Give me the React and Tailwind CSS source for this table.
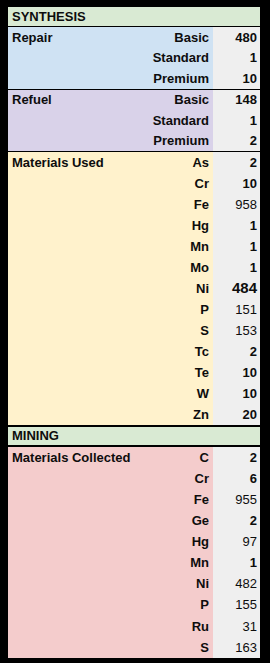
const synthesis = [
  { label: 'Repair', bg: 'bg-[#cfe2f3]', rows: [['Basic', 480], ['Standard', 1], ['Premium', 10]] },
  { label: 'Refuel', bg: 'bg-[#d9d2e9]', rows: [['Basic', 148], ['Standard', 1], ['Premium', 2]] },
]

const used = [
  ['As', 2], ['Cr', 10], ['Fe', 958], ['Hg', 1], ['Mn', 1], ['Mo', 1], ['Ni', 484],
  ['P', 151], ['S', 153], ['Tc', 2], ['Te', 10], ['W', 10], ['Zn', 20],
]

const collected = [
  ['C', 2], ['Cr', 6], ['Fe', 955], ['Ge', 2], ['Hg', 97], ['Mn', 1], ['Ni', 482],
  ['P', 155], ['Ru', 31], ['S', 163],
]

const Row = ({ label, sub, value, h, valueClass }) => (
  <div className={`flex ${h}`}>
    <div className="flex-1 flex items-center justify-between pl-1 pr-1 font-bold">
      <span>{label}</span>
      <span>{sub}</span>
    </div>
    <div className={`w-[47px] bg-[#efefef] flex items-center justify-end pr-[3px] ${valueClass}`}>{value}</div>
  </div>
)

const valueStyle = (sub, v) => {
  if (sub === 'Ni' && v === 484) return 'font-bold text-[15px]'
  return v < 30 ? 'font-bold' : 'font-normal'
}

export default function App() {
  return (
    <div className="bg-black w-[270px] h-[663px] pt-[7px] pl-[8px] pr-[10px] text-[13px] text-[#0d0d0d] font-['Liberation_Sans',Arial,sans-serif]">
      <div className="flex flex-col gap-[1px] bg-black">
        <div className="h-[19px] bg-[#d9ead3] flex items-center pl-1 font-bold">SYNTHESIS</div>
        {synthesis.map((g) => (
          <div key={g.label} className={g.bg}>
            {g.rows.map(([sub, v], i) => (
              <Row key={sub} label={i === 0 ? g.label : ''} sub={sub} value={v} h="h-[20.5px]" valueClass="font-bold" />
            ))}
          </div>
        ))}
        <div className="bg-[#fff2cc] mb-px">
          {used.map(([sub, v], i) => (
            <Row key={sub} label={i === 0 ? 'Materials Used' : ''} sub={sub} value={v} h="h-[21px]" valueClass={valueStyle(sub, v)} />
          ))}
        </div>
        <div className="h-[18px] bg-[#d9ead3] flex items-center pl-1 font-bold mb-px">MINING</div>
        <div className="bg-[#f4cccc]">
          {collected.map(([sub, v], i) => (
            <Row key={sub} label={i === 0 ? 'Materials Collected' : ''} sub={sub} value={v} h="h-[21.1px]" valueClass={valueStyle(sub, v)} />
          ))}
        </div>
      </div>
    </div>
  )
}
